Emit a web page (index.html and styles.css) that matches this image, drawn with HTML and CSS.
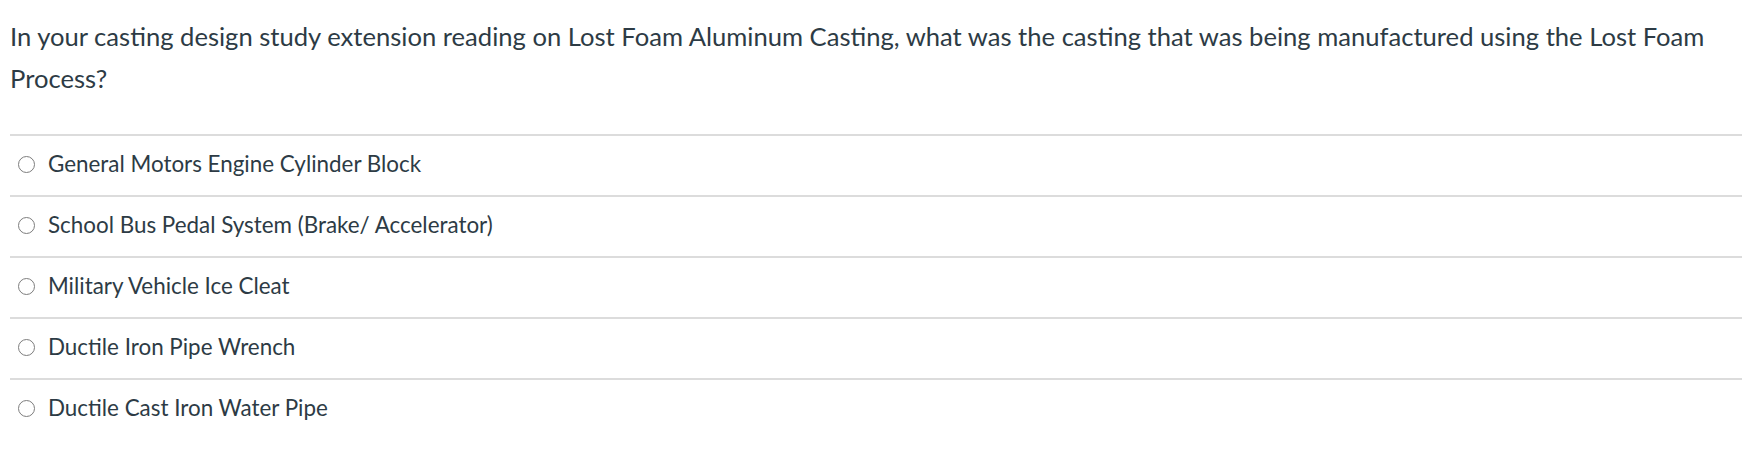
FILE: index.html
```html
<!DOCTYPE html>
<html lang="en">
<head>
<meta charset="utf-8">
<title>Quiz question</title>
<link rel="stylesheet" href="styles.css">
</head>
<body>
<div class="question">
  <div class="question-text">In your casting design study extension reading on Lost Foam Aluminum Casting, what was the casting that was being manufactured using the Lost Foam Process?</div>
  <div class="answers">
    <label class="answer"><span class="radio"></span><span class="answer-text">General Motors Engine Cylinder Block</span></label>
    <label class="answer"><span class="radio"></span><span class="answer-text">School Bus Pedal System (Brake/ Accelerator)</span></label>
    <label class="answer"><span class="radio"></span><span class="answer-text">Military Vehicle Ice Cleat</span></label>
    <label class="answer"><span class="radio"></span><span class="answer-text">Ductile Iron Pipe Wrench</span></label>
    <label class="answer"><span class="radio"></span><span class="answer-text">Ductile Cast Iron Water Pipe</span></label>
  </div>
</div>
</body>
</html>
```
FILE: styles.css
```css
html, body {
  margin: 0;
  padding: 0;
  background: #ffffff;
}
body {
  font-family: Lato, "Open Sans", sans-serif;
  color: #2d3b45;
}
.question {
  padding: 15px 0 0 10px;
}
.question-text {
  font-size: 25.6px;
  line-height: 42px;
  padding-right: 20px;
}
.answers {
  margin-top: 35px;
}
.answer {
  display: flex;
  align-items: center;
  gap: 13px;
  height: 56px;
  padding-bottom: 3px;
  border-top: 2px solid #dcdcdc;
  padding-left: 8px;
  font-size: 22.4px;
}
.radio {
  box-sizing: border-box;
  width: 17px;
  height: 17px;
  border: 1.2px solid #7d7d7d;
  border-radius: 50%;
  background: #fff;
  flex: none;
}
.answer-text {
  line-height: 30px;
}
```
